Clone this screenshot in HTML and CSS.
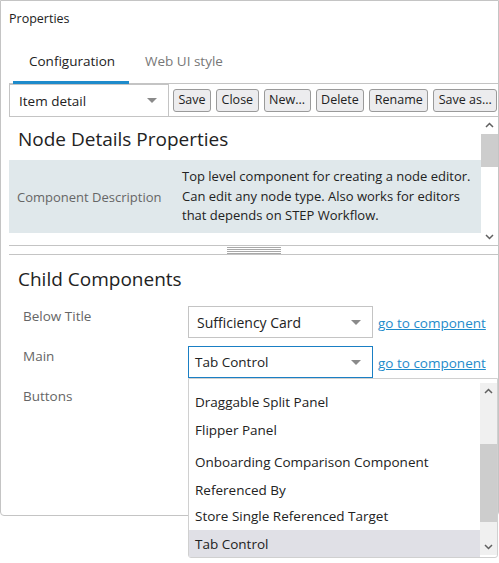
FILE: index.html
```html
<!DOCTYPE html>
<html>
<head>
<meta charset="utf-8">
<link rel="stylesheet" href="styles.css">
</head>
<body>
<div class="panel">
  <div class="title">Properties</div>
  <div class="tabs">
    <div class="tab active">Configuration</div>
    <div class="tab">Web UI style</div>
  </div>
  <div class="toolbar">
    <div class="select tb-select"><span>Item detail</span><i class="caret"></i></div>
    <button class="btn">Save</button>
    <button class="btn">Close</button>
    <button class="btn">New...</button>
    <button class="btn">Delete</button>
    <button class="btn">Rename</button>
    <button class="btn">Save as...</button>
  </div>
  <div class="upper">
    <div class="upper-content">
      <h2 class="heading">Node Details Properties</h2>
      <div class="desc-row">
        <div class="desc-label">Component Description</div>
        <div class="desc-value">Top level component for creating a node editor. Can edit any node type. Also works for editors that depends on STEP Workflow.</div>
      </div>
    </div>
    <div class="scrollbar">
      <svg class="arrow" width="17" height="17" viewBox="0 0 17 17"><path d="M5 10 L8.5 6.5 L12 10" fill="none" stroke="#606060" stroke-width="1.5"/></svg>
      <div class="track"><div class="thumb up-thumb"></div></div>
      <svg class="arrow" width="17" height="17" viewBox="0 0 17 17"><path d="M5 7 L8.5 10.5 L12 7" fill="none" stroke="#606060" stroke-width="1.5"/></svg>
    </div>
  </div>
  <div class="splitter"><div class="grip"></div></div>
  <div class="lower">
    <h2 class="heading">Child Components</h2>
    <div class="row">
      <div class="label">Below Title</div>
      <div class="select field"><span>Sufficiency Card</span><i class="caret"></i></div>
      <a class="link" href="#">go to component</a>
    </div>
    <div class="row">
      <div class="label">Main</div>
      <div class="field-wrap">
        <div class="select field focused"><span>Tab Control</span><i class="caret"></i></div>
        <div class="dropdown">
          <div class="options">
            <div class="opt o1">Draggable Split Panel</div>
            <div class="opt o2">Flipper Panel</div>
            <div class="opt o3">Onboarding Comparison Component</div>
            <div class="opt o4">Referenced By</div>
            <div class="opt o5">Store Single Referenced Target</div>
            <div class="opt o6 selected">Tab Control</div>
          </div>
          <div class="scrollbar dd-scroll">
            <svg class="arrow" width="17" height="17" viewBox="0 0 17 17"><path d="M5 10 L8.5 6.5 L12 10" fill="none" stroke="#606060" stroke-width="1.5"/></svg>
            <div class="track"><div class="thumb dd-thumb"></div></div>
            <svg class="arrow" width="17" height="17" viewBox="0 0 17 17"><path d="M5 7 L8.5 10.5 L12 7" fill="none" stroke="#606060" stroke-width="1.5"/></svg>
          </div>
        </div>
      </div>
      <a class="link" href="#">go to component</a>
    </div>
    <div class="row">
      <div class="label">Buttons</div>
    </div>
  </div>
</div>
</body>
</html>
```
FILE: styles.css
```css
* { box-sizing: border-box; }
html, body { margin: 0; padding: 0; background: #fff; }
body {
  font-family: "Open Sans", "Noto Sans", sans-serif;
  font-size: 13px;
  color: #222;
  width: 499px;
  height: 563px;
  overflow: hidden;
}
.panel {
  width: 499px;
  height: 516px;
  border: 1px solid #c4c4c4;
  border-radius: 0 0 4px 4px;
  display: flex;
  flex-direction: column;
}
.title {
  height: 39px;
  padding: 9px 0 0 8px;
  font-size: 12.5px;
  color: #222;
}
.tabs {
  margin-left: 8px;
  height: 44px;
  display: flex;
  border-bottom: 1px solid #c4c4c4;
  padding-left: 4px;
}
.tab {
  padding: 12px 16px 0;
  font-size: 13.5px;
  color: #777;
  border-bottom: 3px solid transparent;
  margin-bottom: -1px;
}
.tab.active {
  color: #222;
  border-bottom-color: #1e8bcb;
  width: 116px;
}
.toolbar {
  margin-left: 8px;
  height: 33px;
  display: flex;
  align-items: center;
  border-bottom: 1px solid #c4c4c4;
}
.select {
  display: flex;
  align-items: center;
  justify-content: space-between;
  border: 1px solid #c4c4c4;
  background: #fff;
  font-size: 13.5px;
  color: #222;
}
.tb-select {
  flex: none;
  width: 160px;
  height: 33px;
  margin-top: 1px;
  padding: 0 11px 0 9px;
  margin-right: 4px;
}
.caret {
  width: 0; height: 0;
  border-left: 5px solid transparent;
  border-right: 5px solid transparent;
  border-top: 5px solid #8a8a8a;
}
.btn {
  flex: none;
  white-space: nowrap;
  font-family: inherit;
  font-size: 12.5px;
  color: #222;
  height: 23px;
  padding: 0 4.5px;
  margin: 0 5px 0 0;
  background: #ececee;
  border: 1px solid #9a9a9a;
  border-radius: 3px;
  line-height: 20px;
}
.upper {
  margin-left: 8px;
  height: 128px;
  display: flex;
}
.upper-content { flex: 1; }
.heading {
  margin: 0;
  font-weight: 400;
  font-size: 19px;
  color: #222;
  height: 43px;
  padding: 9px 0 0 9px;
}
.desc-row {
  background: #e0e8eb;
  height: 73px;
  display: flex;
  align-items: center;
}
.desc-label {
  width: 173px;
  padding-left: 8px;
  color: #666;
  font-size: 13px;
}
.desc-value {
  flex: 1;
  font-size: 13px;
  line-height: 19.5px;
  color: #222;
  padding-right: 0;
}
.scrollbar {
  width: 17px;
  display: flex;
  flex-direction: column;
  background: #f0f0f0;
}
.upper .scrollbar { background: #fff; }
.arrow { display: block; flex: none; }
.track { flex: 1; position: relative; }
.thumb {
  background: #cdcdcd;
  width: 17px;
}
.up-thumb { margin-top: 0; height: 33px; }
.splitter {
  margin-left: 8px;
  height: 10px;
  border-top: 1px solid #c4c4c4;
  border-bottom: 1px solid #c4c4c4;
  display: flex;
  justify-content: center;
  align-items: center;
}
.grip {
  width: 54px;
  height: 7px;
  background: repeating-linear-gradient(to bottom, #a8a8a8 0 1px, #fff 1px 2px);
}
.lower {
  margin-left: 8px;
  flex: 1;
}
.lower .heading { padding-top: 11px; height: 51px; }
.row {
  display: flex;
  height: 40px;
  position: relative;
}
.label {
  width: 179px;
  padding-left: 14px;
  color: #666;
  font-size: 13.5px;
  line-height: 20px;
}
.field-wrap { position: relative; }
.field {
  width: 185px;
  height: 32px;
  padding: 0 11px 0 8px;
  font-size: 14px;
}
.field.focused {
  border-color: #1a7fc4;
  padding-left: 6px;
  font-size: 13.5px;
}
.link {
  margin-left: 5px;
  color: #1e8bcb;
  font-size: 13.5px;
  line-height: 34px;
  text-decoration: underline;
}
.dropdown {
  position: absolute;
  left: 0;
  top: 32px;
  width: 310px;
  height: 180px;
  background: #fff;
  border: 1px solid #d0d0d0;
  border-radius: 0 0 3px 3px;
  display: flex;
  z-index: 5;
}
.options { flex: 1; padding-top: 9px; }
.opt {
  height: 28px;
  line-height: 28px;
  padding-left: 6px;
  font-size: 13.5px;
  color: #222;
  white-space: nowrap;
}
.o3 { margin-top: 4px; }
.o4 { height: 26px; line-height: 28px; }
.o5 { height: 28px; line-height: 28px; }
.opt.selected { background: #e0e0e6; height: 27px; }
.dd-scroll { margin-top: 4px; height: 172px; }
.dd-thumb { margin-top: 44px; height: 78px; }
```
